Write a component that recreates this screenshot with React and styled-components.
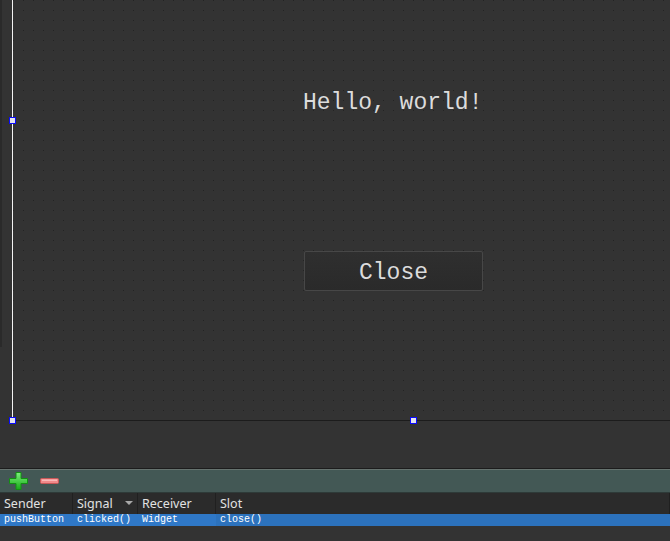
import React from 'react'
import styled, { createGlobalStyle } from 'styled-components'

const Global = createGlobalStyle`
  html, body { margin: 0; padding: 0; background: #333333; overflow: hidden; }
  #root { width: 670px; height: 541px; }
`

const mono = `"Liberation Mono", "Courier New", Courier`

const Shell = styled.div`
  width: 670px;
  height: 541px;
  display: flex;
  flex-direction: column;
  background: #333333;
  font-family: "Noto Sans", "Liberation Sans", sans-serif;
`

const Canvas = styled.div`
  height: 469px;
  display: flex;
  flex-direction: column;
`

const CanvasTop = styled.div`
  position: relative;
  height: 421px;
  display: flex;
`

const Gutter = styled.div`
  width: 12px;
  background: linear-gradient(90deg, #2a2a2a 2px, #333333 2px);
  background-size: 12px 347px;
  background-repeat: no-repeat;
`

const Form = styled.div`
  position: relative;
  flex: 1;
  border-left: 1px solid #f4f4f4;
  border-bottom: 1px solid #1c1c1c;
  background-color: #333333;
  background-image:
    linear-gradient(90deg, transparent 1px, #333333 1px),
    linear-gradient(#232323 1px, #333333 1px);
  background-size: 10px 10px;
  background-position: 10px 0, 10px 0;
`

const Handle = styled.div`
  position: absolute;
  z-index: 2;
  box-sizing: border-box;
  width: 7px;
  height: 7px;
  border: 1px solid #0a0aff;
  background: #e4e4ee;
  left: ${p => p.x - 3}px;
  top: ${p => p.y - 3}px;
`

const Hello = styled.div`
  position: absolute;
  left: 290px;
  top: 89px;
  font-family: ${mono};
  font-size: 23px;
  line-height: 28px;
  color: #dcdcdc;
  white-space: pre;
`

const CloseButton = styled.div`
  position: absolute;
  left: 291px;
  top: 251px;
  width: 177px;
  height: 35px;
  padding-top: 3px;
  border: 1px solid #474747;
  border-radius: 2px;
  background: linear-gradient(#2f2f2f, #2a2a2a);
  display: flex;
  align-items: center;
  justify-content: center;
  font-family: ${mono};
  font-size: 23px;
  color: #dcdcdc;
`

const CanvasRest = styled.div`
  flex: 1;
  background: #333333;
  border-bottom: 1px solid #1c1c1c;
`

const Toolbar = styled.div`
  height: 22px;
  border-top: 1px solid #66736f;
  border-bottom: 1px solid #2e3a38;
  background: #435855;
  display: flex;
  align-items: center;
  gap: 12px;
  padding-left: 9px;
`

const Header = styled.div`
  height: 21px;
  background: #2b2b2b;
  display: flex;
`

const HeadCell = styled.div`
  position: relative;
  width: ${p => p.w}px;
  box-sizing: border-box;
  border-right: 1px solid #202020;
  padding-left: 4px;
  font-size: 12.5px;
  line-height: 21px;
  color: #e2e2e2;
`

const SortArrow = styled.span`
  position: absolute;
  right: 4px;
  top: 8px;
  width: 0;
  height: 0;
  border-left: 4px solid transparent;
  border-right: 4px solid transparent;
  border-top: 4px solid #a8a8a8;
`

const Row = styled.div`
  height: 12px;
  background: #2f78c7;
  display: flex;
`

const Cell = styled.div`
  width: ${p => p.w}px;
  box-sizing: border-box;
  padding-left: 4px;
  font-family: ${mono};
  font-size: 10px;
  line-height: 12px;
  color: #ffffff;
  white-space: pre;
  background: ${p => (p.focus ? '#2c72bd' : 'transparent')};
`

const PlusIcon = () => (
  <svg width="19" height="18" viewBox="0 0 19 18">
    <defs>
      <linearGradient id="pg" x1="0" y1="0" x2="0" y2="1">
        <stop offset="0" stopColor="#7cf27c" />
        <stop offset="1" stopColor="#18a818" />
      </linearGradient>
    </defs>
    <path d="M7 0.5h5v6h6.5v5h-6.5v6h-5v-6h-6.5v-5h6.5z" fill="url(#pg)" stroke="#129012" strokeWidth="1" />
  </svg>
)

const MinusIcon = () => (
  <svg width="19" height="7" viewBox="0 0 19 7">
    <rect x="0.5" y="0.5" width="18" height="5" rx="1" fill="#f08a8a" stroke="#c85858" />
    <rect x="2" y="1.5" width="15" height="1.5" fill="#fbb8b8" />
  </svg>
)

const cols = [73, 65, 78, 454]

export default function App() {
  return (
    <Shell>
      <Global />
      <Canvas>
        <CanvasTop>
          <Gutter />
          <Form>
            <Hello>Hello, world!</Hello>
            <CloseButton>Close</CloseButton>
          </Form>
          <Handle x={12} y={120} />
          <Handle x={12} y={420} />
          <Handle x={413} y={420} />
        </CanvasTop>
        <CanvasRest />
      </Canvas>
      <Toolbar>
        <PlusIcon />
        <MinusIcon />
      </Toolbar>
      <Header>
        <HeadCell w={cols[0]}>Sender</HeadCell>
        <HeadCell w={cols[1]}>Signal<SortArrow /></HeadCell>
        <HeadCell w={cols[2]}>Receiver</HeadCell>
        <HeadCell w={cols[3]}>Slot</HeadCell>
      </Header>
      <Row>
        <Cell w={cols[0]}>pushButton</Cell>
        <Cell w={cols[1]}>clicked()</Cell>
        <Cell w={cols[2]}>Widget</Cell>
        <Cell w={cols[3]} focus>close()</Cell>
      </Row>
    </Shell>
  )
}
